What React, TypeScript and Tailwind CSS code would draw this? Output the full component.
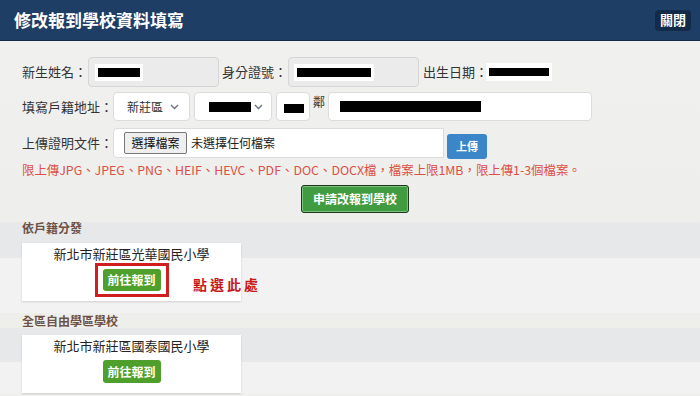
const font = { fontFamily: '"Noto Sans CJK TC", "Noto Sans", sans-serif' };

function Redacted({ w, h = 9 }: { w: number; h?: number }) {
  return <span className="inline-block bg-black" style={{ width: w, height: h }} />;
}

function Chevron() {
  return (
    <svg width="9" height="6" viewBox="0 0 9 6" className="text-gray-500">
      <path d="M1 1l3.5 3.5L8 1" fill="none" stroke="currentColor" strokeWidth="1.4" />
    </svg>
  );
}

function SchoolCard({ name, highlight }: { name: string; highlight?: boolean }) {
  return (
    <div className="relative flex h-[58px] w-[219px] flex-col items-center bg-white pt-[1px] shadow-[0_1px_2px_rgba(0,0,0,0.15)]">
      <div className="text-[13px] leading-[19px] text-[#222]">{name}</div>
      {highlight ? (
        <div className="border-[3px] border-[#d01f1f] px-[5px] py-[3px]">
          <button className="h-[22px] w-[58px] rounded-[3px] bg-[#4e9f2b] text-[12px] font-bold leading-[22px] text-white">前往報到</button>
        </div>
      ) : (
        <button className="mt-[5px] h-[23px] w-[58px] rounded-[3px] bg-[#4e9f2b] text-[12px] font-bold leading-[23px] text-white">前往報到</button>
      )}
      {highlight && (
        <span
          className="absolute left-[171px] top-[31px] whitespace-nowrap text-[14px] font-bold tracking-[3px] text-[#c81a1a]"
          style={{ fontFamily: '"Noto Sans CJK TC", serif' }}
        >
          點選此處
        </span>
      )}
    </div>
  );
}

export default function App() {
  return (
    <div className="h-[396px] w-[700px] overflow-hidden bg-[#efefee]" style={font}>
      <header className="flex h-[41px] items-center justify-between border-b border-[#152a44] bg-[#1f3e66] pl-[14px] pr-[9px]">
        <h1 className="text-[17px] font-bold text-white">修改報到學校資料填寫</h1>
        <button className="h-[21px] w-[36px] rounded-[4px] bg-[#132a49] text-[13px] font-bold text-white">關閉</button>
      </header>

      <div className="bg-[linear-gradient(to_bottom,#f0f0ef_0px,#eeeeec_180px,#e7e8e9_183px,#e7e8e9_217px,#f2f2f2_217px,#f2f2f2_272px,#eeefeb_272px,#eeefeb_287px,#e7e8e9_287px,#e7e8e9_321px,#f2f2f2_321px)] pl-[22px] pt-[16px] text-[13px] text-[#333]">
        <div className="flex h-[30px] items-center whitespace-nowrap">
          <span className="w-[66px] shrink-0">新生姓名：</span>
          <div className="flex h-[30px] w-[131px] shrink-0 items-center rounded-[4px] border border-[#d6d6d6] bg-[#ebebeb] pl-[6px]">
            <span className="flex h-[17px] w-[48px] items-center justify-center bg-white"><Redacted w={42} /></span>
          </div>
          <span className="ml-[3px] w-[66px] shrink-0">身分證號：</span>
          <div className="flex h-[30px] w-[131px] shrink-0 items-center rounded-[4px] border border-[#d6d6d6] bg-[#ebebeb] pl-[5px]">
            <span className="flex h-[17px] w-[80px] items-center justify-center bg-white"><Redacted w={74} /></span>
          </div>
          <span className="ml-[4px] w-[63px] shrink-0">出生日期：</span>
          <span className="flex h-[18px] w-[66px] shrink-0 items-center justify-center bg-white"><Redacted w={60} h={8} /></span>
        </div>

        <div className="mt-[5px] flex h-[29px] items-center whitespace-nowrap">
          <span className="w-[91px] shrink-0">填寫戶籍地址：</span>
          <div className="flex h-[29px] w-[77px] items-center justify-between rounded-[4px] border border-[#dcdcdc] bg-white pl-[13px] pr-[10px] text-[12px]">
            <span>新莊區</span>
            <Chevron />
          </div>
          <div className="ml-[4px] flex h-[29px] w-[78px] items-center justify-between rounded-[4px] border border-[#dcdcdc] bg-white pl-[14px] pr-[8px]">
            <Redacted w={42} h={10} />
            <Chevron />
          </div>
          <div className="ml-[4px] flex h-[29px] w-[34px] items-end rounded-[4px] border border-[#dcdcdc] bg-white pb-[7px] pl-[7px]">
            <Redacted w={20} />
          </div>
          <span className="ml-[3px] w-[15px] self-start pt-[1px] text-[12px]">鄰</span>
          <div className="flex h-[29px] w-[264px] items-center rounded-[4px] border border-[#dcdcdc] bg-white pl-[11px]">
            <Redacted w={141} h={11} />
          </div>
        </div>

        <div className="mt-[7px] flex h-[30px] items-center whitespace-nowrap">
          <span className="w-[91px] shrink-0">上傳證明文件：</span>
          <div className="flex h-[30px] w-[331px] items-center rounded-l-[4px] border border-[#dcdcdc] bg-white pl-[10px]">
            <span className="flex h-[22px] w-[63px] items-center justify-center rounded-[2px] border border-[#777] bg-[#efefef] text-[12px] text-[#111]">選擇檔案</span>
            <span className="ml-[4px] text-[12px] text-[#222]">未選擇任何檔案</span>
          </div>
          <button className="ml-[3px] mt-[6px] h-[25px] w-[40px] rounded-[3px] bg-[#3b86c8] text-[11px] font-bold text-white">上傳</button>
        </div>

        <p className="mt-[3px] text-[12.4px] leading-[18px] text-[#dc5044]">
          限上傳JPG、JPEG、PNG、HEIF、HEVC、PDF、DOC、DOCX檔，檔案上限1MB，限上傳1-3個檔案。
        </p>

        <div className="mt-[6px] flex pl-[279px]">
          <button className="h-[28px] w-[108px] rounded-[3px] border border-[#1d361d] bg-[#419b41] text-[12px] font-bold text-white shadow-[inset_0_0_0_1px_#7cc27c]">
            申請改報到學校
          </button>
        </div>

        <h2 className="mt-[8px] text-[12px] font-bold leading-[14px] text-[#6e5248]">依戶籍分發</h2>
        <div className="mt-[8px]">
          <SchoolCard name="新北市新莊區光華國民小學" highlight />
        </div>

        <h2 className="mt-[13px] text-[12px] font-bold leading-[14px] text-[#6e5248]">全區自由學區學校</h2>
        <div className="mt-[7px]">
          <SchoolCard name="新北市新莊區國泰國民小學" />
        </div>
      </div>
    </div>
  );
}
